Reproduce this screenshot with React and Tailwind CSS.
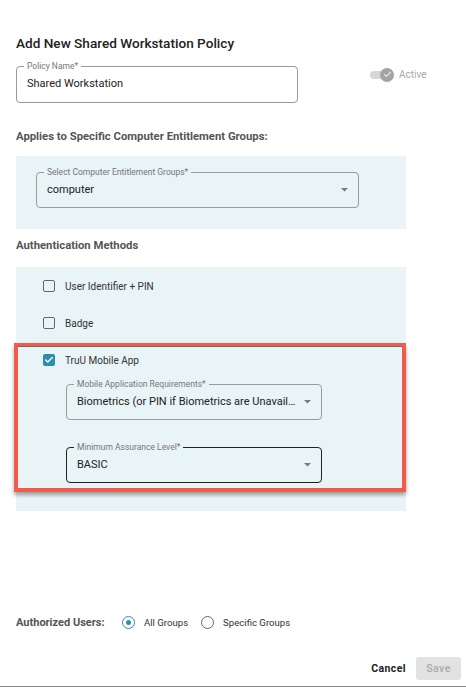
import { Check } from 'lucide-react';

const font = { fontFamily: 'Roboto, "Liberation Sans", sans-serif' };

// Outlined select / input with label on the border
const OutlinedField = ({ label, value, width, dark, select, labelBg = 'bg-white' }) => (
    <div className={`relative h-[36px] ${width} rounded-[4px] border ${dark ? 'border-[#222]' : 'border-[#9a9a9a]'} flex items-center pl-[10px] pr-[10px]`}>
        <span className={`absolute -top-[7px] left-[7px] px-[3px] text-[8.5px] leading-[12px] text-[#777] ${labelBg}`}>{label}</span>
        <span className="flex-1 whitespace-nowrap text-[11px] text-[#222]">{value}</span>
        {select && (
            <svg width="7" height="4" viewBox="0 0 7 4" className="ml-1 shrink-0">
                <path d="M0 0 L7 0 L3.5 3.5 Z" fill="#7a7a7a" />
            </svg>
        )}
    </div>
);

const CheckRow = ({ label, checked }) => (
    <div className="h-[24px] flex items-center gap-[10px]">
        {checked ? (
            <div className="w-[12px] h-[12px] rounded-[2px] bg-[#2a8fad] flex items-center justify-center">
                <Check size={10} strokeWidth={3.5} color="white" />
            </div>
        ) : (
            <div className="w-[12px] h-[12px] rounded-[2px] border-[1.5px] border-[#666]" />
        )}
        <span className="text-[10px] text-[#333]">{label}</span>
    </div>
);

const Radio = ({ checked, label }) => (
    <div className="flex items-center gap-[9px]">
        <div className={`w-[13px] h-[13px] rounded-full border-[1.5px] ${checked ? 'border-[#2a8fad]' : 'border-[#666]'} flex items-center justify-center`}>
            {checked && <div className="w-[5px] h-[5px] rounded-full bg-[#2a8fad]" />}
        </div>
        <span className="text-[9.6px] text-[#333]">{label}</span>
    </div>
);

export default function App() {
    return (
        <div style={font} className="w-[466px] h-[687px] bg-white border-b border-[#888] flex flex-col px-4 overflow-hidden">
            {/* Title */}
            <h1 className="pt-[34px] text-[13.6px] leading-[18px] font-medium text-[#222]">Add New Shared Workstation Policy</h1>

            {/* Policy name + toggle */}
            <div className="mt-[14px] flex items-start">
                <div className="relative w-[282px] h-[37px] rounded-[4px] border border-[#9a9a9a] flex items-center pl-[10px]">
                    <span className="absolute -top-[7px] left-[7px] px-[3px] text-[8.5px] leading-[12px] text-[#777] bg-white">Policy Name*</span>
                    <span className="text-[11px] text-[#222]">Shared Workstation</span>
                </div>
                <div className="ml-[72px] mt-[1px] flex items-center gap-[5px]">
                    <div className="relative w-[24px] h-[14px] flex items-center">
                        <div className="w-[22px] h-[8px] rounded-full bg-[#d6d6d6]" />
                        <div className="absolute right-0 top-0 w-[14px] h-[14px] rounded-full bg-[#a3a3a3] flex items-center justify-center">
                            <Check size={9} strokeWidth={3} color="#e8e8e8" />
                        </div>
                    </div>
                    <span className="text-[10px] text-[#aaa]">Active</span>
                </div>
            </div>

            {/* Computer groups */}
            <h2 className="mt-[27px] text-[11.3px] leading-[14px] font-bold text-[#555]">Applies to Specific Computer Entitlement Groups:</h2>
            <div className="mt-[12px] w-[390px] bg-[#e8f4f6] pt-[16px] pb-[21px] pl-[20px]">
                <OutlinedField label="Select Computer Entitlement Groups*" value="computer" width="w-[323px]" select labelBg="bg-[#e8f4f6]" />
            </div>

            {/* Authentication methods */}
            <h2 className="mt-[10px] text-[11.3px] leading-[14px] font-bold text-[#555]">Authentication Methods</h2>
            <div className="mt-[14px] w-[390px] bg-[#e8f4f6] pt-[7px] pb-[19px]">
                <div className="pl-[27px] flex flex-col gap-[13px]">
                    <CheckRow label="User Identifier + PIN" />
                    <CheckRow label="Badge" />
                </div>
                <div className="mt-[8px] -ml-[2px] w-[392px] border-[4px] border-[#f25a4c] shadow-[0_3px_4px_rgba(0,0,0,0.35)]">
                    <div className="border-t border-[#6b6b6b] pl-[25px] pt-[1px] pb-[5px] -mt-[1px]">
                        <CheckRow label="TruU Mobile App" checked />
                        <div className="pl-[23px] mt-[12px] flex flex-col gap-[27px]">
                            <OutlinedField label="Mobile Application Requirements*" value="Biometrics (or PIN if Biometrics are Unavail…" width="w-[256px]" select labelBg="bg-[#e8f4f6]" />
                            <OutlinedField label="Minimum Assurance Level*" value="BASIC" width="w-[256px]" select dark labelBg="bg-[#e8f4f6]" />
                        </div>
                    </div>
                </div>
            </div>

            {/* Authorized users */}
            <div className="mt-[102px] h-[20px] flex items-center">
                <span className="text-[11px] font-bold text-[#555] w-[106px]">Authorized Users:</span>
                <div className="flex items-center gap-[13px]">
                    <Radio checked label="All Groups" />
                    <Radio label="Specific Groups" />
                </div>
            </div>

            {/* Footer */}
            <div className="mt-[24px] flex justify-end items-center gap-[10px] -mr-[11px]">
                <button className="text-[10.5px] font-bold text-[#222] tracking-[0.4px]">Cancel</button>
                <button className="w-[45px] h-[23px] rounded-[3px] bg-[#e2e2e2] text-[10.5px] font-medium text-[#aaa] tracking-[0.4px]">Save</button>
            </div>
        </div>
    );
}
